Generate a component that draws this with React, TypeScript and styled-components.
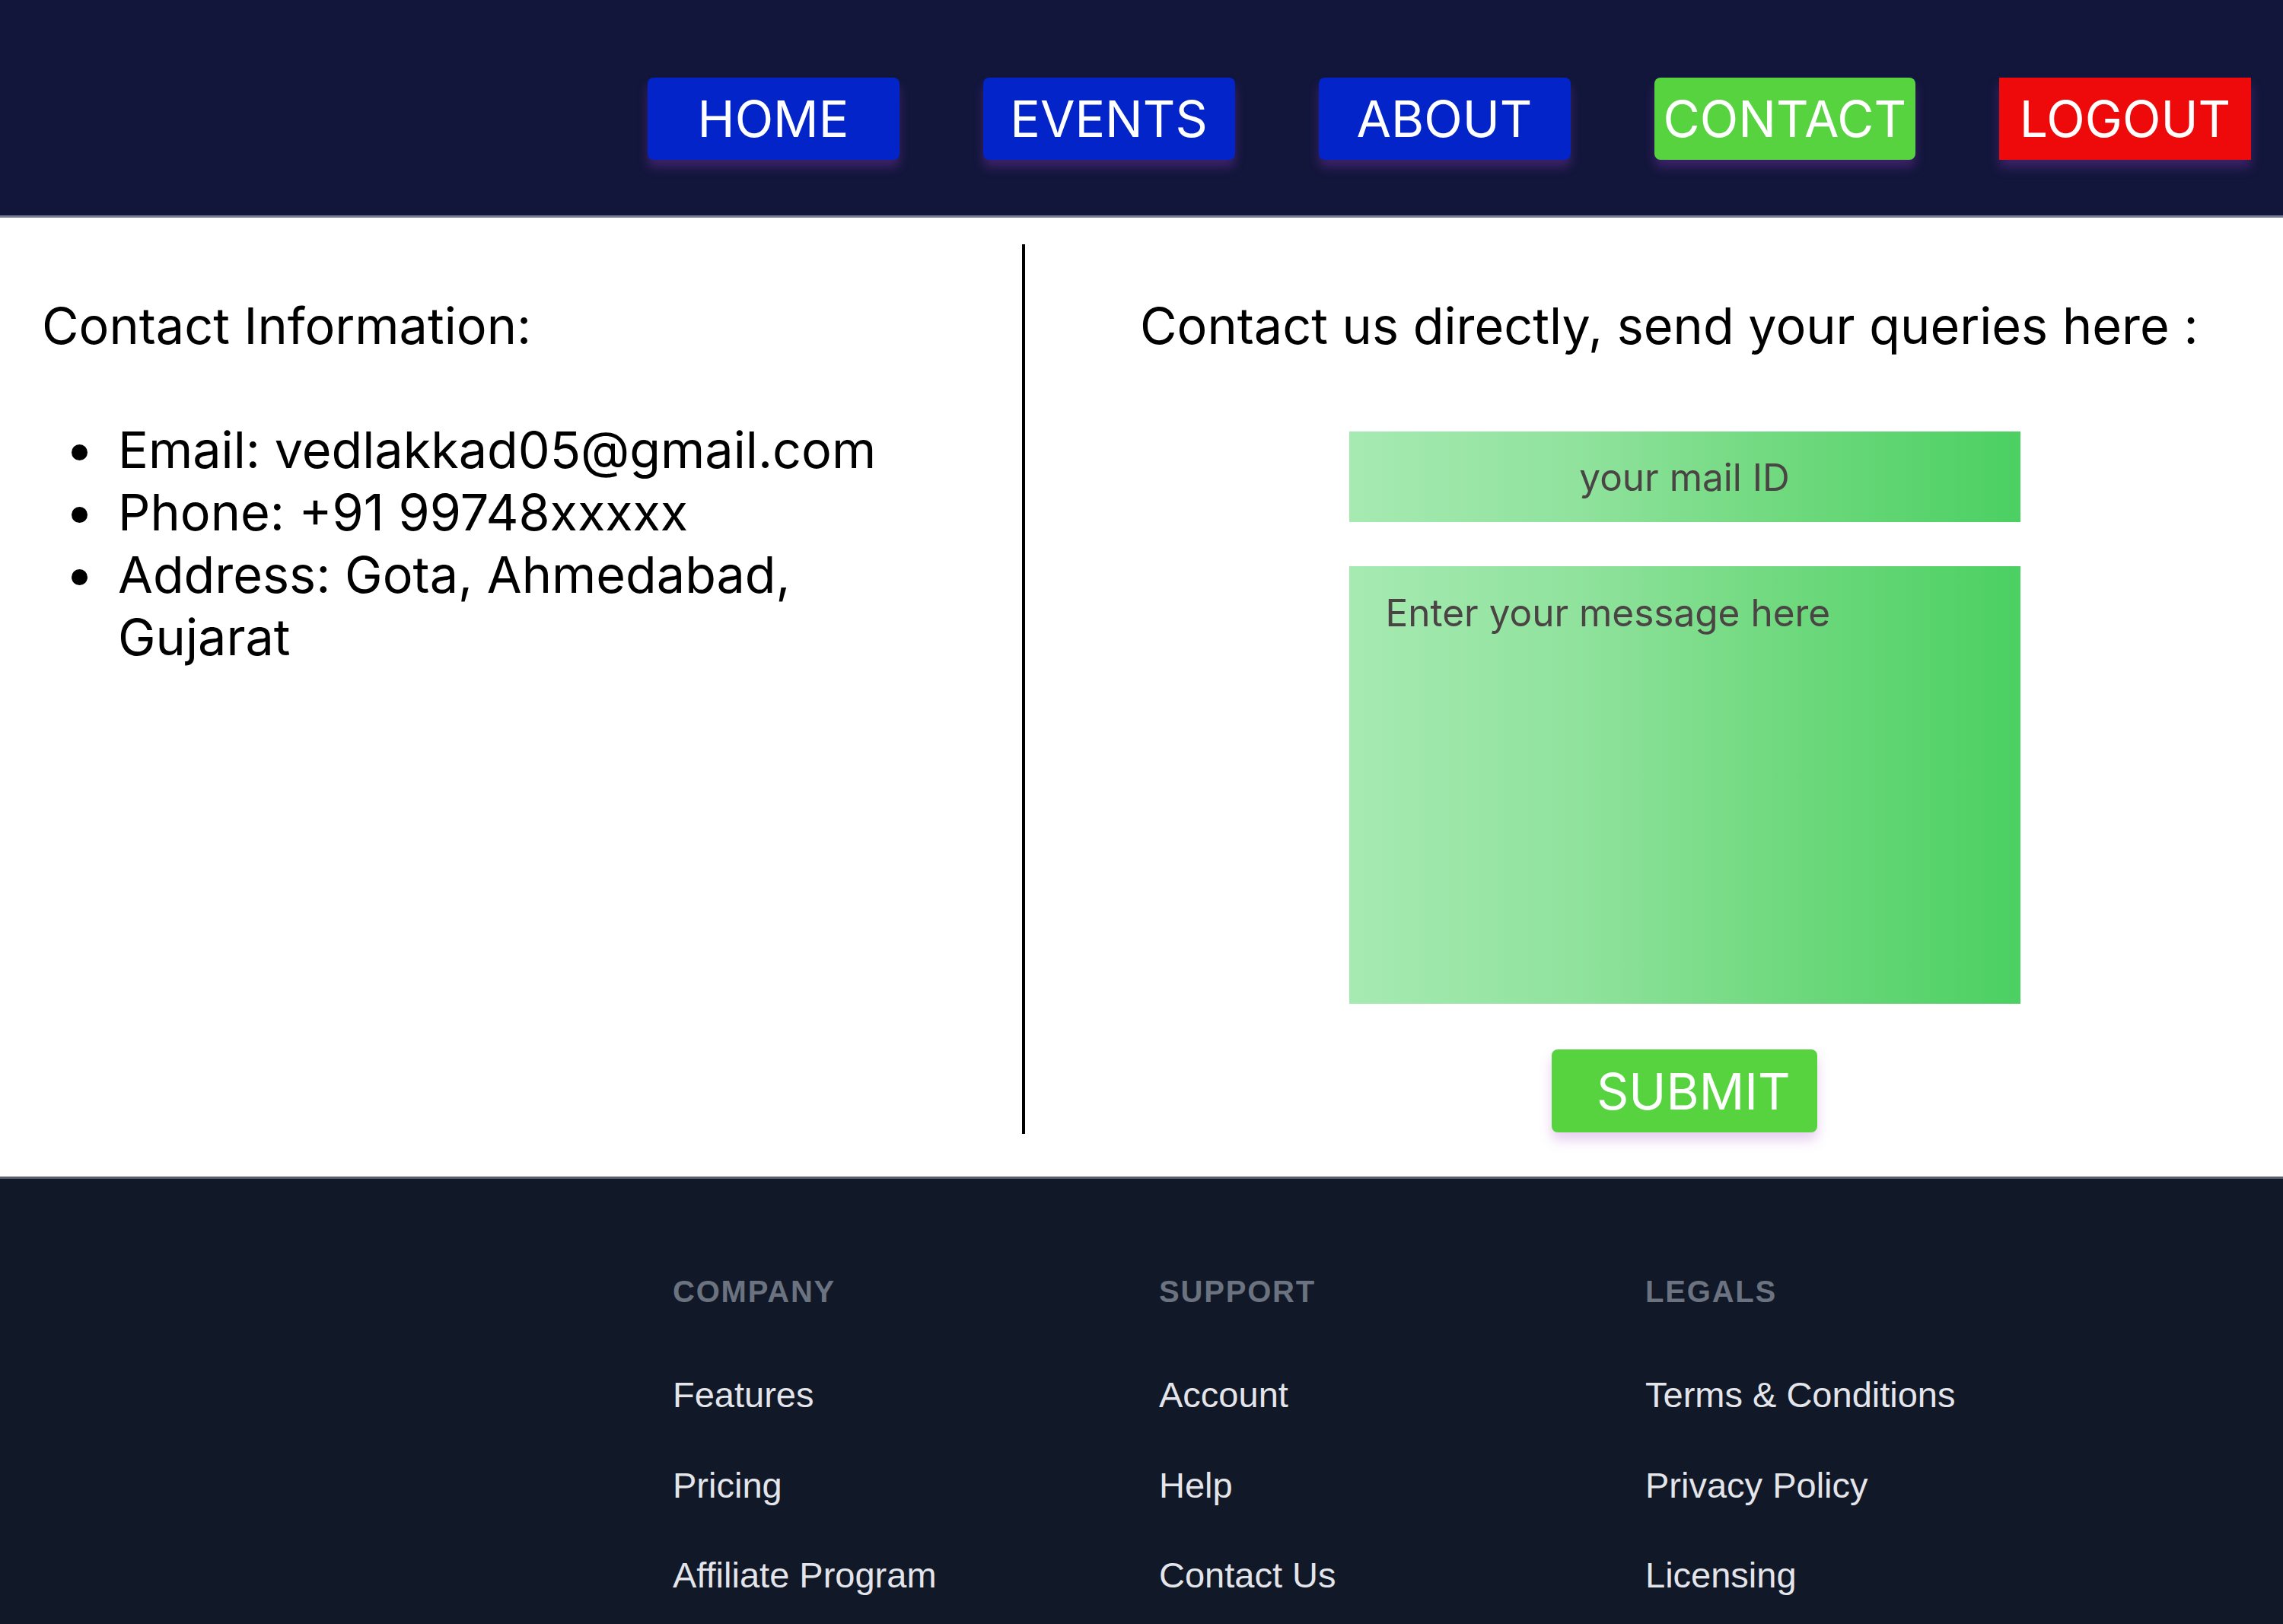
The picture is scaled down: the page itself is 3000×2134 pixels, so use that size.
import React from "react";
import styled, { createGlobalStyle } from "styled-components";

const GlobalStyle = createGlobalStyle`
  html, body {
    margin: 0;
    padding: 0;
    background: #ffffff;
  }
  body {
    width: 3000px;
    font-family: Inter, "Noto Sans", sans-serif;
  }
  * {
    box-sizing: border-box;
  }
`;

const NavBar = styled.nav`
  height: 286px;
  background: #12163b;
  border-bottom: 3px solid #767a96;
  display: flex;
  justify-content: flex-end;
  align-items: flex-start;
  gap: 110px;
  padding: 102px 42px 0 0;
`;

const NavButton = styled.button<{ $bg: string; $square?: boolean }>`
  min-width: 331px;
  height: 108px;
  padding: 0 12px;
  display: flex;
  align-items: center;
  justify-content: center;
  border: none;
  border-radius: ${(p) => (p.$square ? "0" : "8px")};
  background: ${(p) => p.$bg};
  color: #ffffff;
  font-family: Inter, "Noto Sans", sans-serif;
  font-size: 66px;
  font-weight: 400;
  line-height: 1;
  box-shadow: 0 10px 14px rgba(150, 60, 200, 0.32);
  cursor: pointer;
`;

const Main = styled.main`
  display: flex;
  align-items: stretch;
  padding: 35px 0 56px;
  background: #ffffff;
`;

const InfoColumn = styled.section`
  flex: 0 0 1347px;
  border-right: 4px solid #000000;
  padding: 69px 118px 0 55px;
`;

const SectionTitle = styled.h2`
  margin: 0;
  font-family: Inter, "Noto Sans", sans-serif;
  font-size: 66.5px;
  font-weight: 400;
  line-height: 77px;
  color: #000000;
`;

const InfoList = styled.ul`
  margin: 83px 0 0;
  padding-left: 88px;
  font-size: 66.5px;
  line-height: 82px;
  color: #000000;
`;

const InfoItem = styled.li`
  margin: 0;
  padding-left: 12px;
`;

const FormColumn = styled.section`
  flex: 1;
  padding: 69px 0 2px 80px;
  display: flex;
  flex-direction: column;
  align-items: center;
`;

const QueryTitle = styled(SectionTitle)`
  align-self: flex-start;
  margin-left: 71px;
`;

const fieldBg = "linear-gradient(90deg, #a6eab2 0%, #8fe29c 35%, #6fd97e 65%, #4bd062 100%)";

const MailInput = styled.input`
  width: 882px;
  height: 119px;
  margin-top: 100px;
  border: none;
  outline: none;
  padding: 0;
  background: ${fieldBg};
  font-family: Inter, "Noto Sans", sans-serif;
  font-size: 49.5px;
  text-align: center;
  color: #4a4444;
  &::placeholder {
    color: #4a4444;
    opacity: 1;
  }
`;

const MessageArea = styled.textarea`
  width: 882px;
  height: 575px;
  margin-top: 58px;
  border: none;
  outline: none;
  resize: none;
  padding: 32px 48px;
  background: ${fieldBg};
  font-family: Inter, "Noto Sans", sans-serif;
  font-size: 49.5px;
  line-height: 58px;
  color: #4a4444;
  &::placeholder {
    color: #4a4444;
    opacity: 1;
  }
`;

const SubmitButton = styled.button`
  margin-top: 60px;
  width: 349px;
  height: 109px;
  padding: 0 42px 0 59px;
  border: none;
  border-radius: 8px;
  background: #57d33f;
  color: #ffffff;
  font-family: Inter, "Noto Sans", sans-serif;
  font-size: 66px;
  font-weight: 400;
  line-height: 1;
  box-shadow: 0 10px 16px rgba(170, 80, 200, 0.28);
  cursor: pointer;
`;

const Footer = styled.footer`
  background: #111827;
  border-top: 3px solid #56606e;
  padding: 125px 0 120px;
  font-family: "Liberation Sans", Arial, sans-serif;
`;

const FooterGrid = styled.div`
  width: 2510px;
  margin: 0 auto;
  display: grid;
  grid-template-columns: repeat(4, 1fr);
  column-gap: 46px;
`;

const FooterColumn = styled.div`
  display: flex;
  flex-direction: column;
`;

const FooterHeading = styled.h3`
  margin: 0 0 86px;
  font-size: 40px;
  font-weight: 700;
  line-height: 46px;
  letter-spacing: 1.8px;
  text-transform: uppercase;
  color: #6b7280;
`;

const FooterLinks = styled.ul`
  margin: 0;
  padding: 0;
  list-style: none;
  display: flex;
  flex-direction: column;
  gap: 65.5px;
`;

const FooterLink = styled.a`
  display: block;
  font-size: 47px;
  line-height: 53px;
  color: #e3e5ea;
  text-decoration: none;
`;

const footerColumns = [
  { title: "Company", links: ["Features", "Pricing", "Affiliate Program"] },
  { title: "Support", links: ["Account", "Help", "Contact Us"] },
  { title: "Legals", links: ["Terms & Conditions", "Privacy Policy", "Licensing"] },
];

const navItems = [
  { label: "HOME", bg: "#0324c8" },
  { label: "EVENTS", bg: "#0324c8" },
  { label: "ABOUT", bg: "#0324c8" },
  { label: "CONTACT", bg: "#57d33f" },
  { label: "LOGOUT", bg: "#ee0a0a", square: true },
];

export default function App() {
  return (
    <>
      <GlobalStyle />
      <NavBar>
        {navItems.map((item) => (
          <NavButton key={item.label} $bg={item.bg} $square={item.square}>
            {item.label}
          </NavButton>
        ))}
      </NavBar>
      <Main>
        <InfoColumn>
          <SectionTitle>Contact Information:</SectionTitle>
          <InfoList>
            <InfoItem>Email: vedlakkad05@gmail.com</InfoItem>
            <InfoItem>Phone: +91 99748xxxxx</InfoItem>
            <InfoItem>Address: Gota, Ahmedabad, Gujarat</InfoItem>
          </InfoList>
        </InfoColumn>
        <FormColumn>
          <QueryTitle>Contact us directly, send your queries here :</QueryTitle>
          <MailInput type="email" placeholder="your mail ID" />
          <MessageArea placeholder="Enter your message here" />
          <SubmitButton type="button">SUBMIT</SubmitButton>
        </FormColumn>
      </Main>
      <Footer>
        <FooterGrid>
          <FooterColumn />
          {footerColumns.map((col) => (
            <FooterColumn key={col.title}>
              <FooterHeading>{col.title}</FooterHeading>
              <FooterLinks>
                {col.links.map((l) => (
                  <li key={l}>
                    <FooterLink href="#">{l}</FooterLink>
                  </li>
                ))}
              </FooterLinks>
            </FooterColumn>
          ))}
        </FooterGrid>
      </Footer>
    </>
  );
}
